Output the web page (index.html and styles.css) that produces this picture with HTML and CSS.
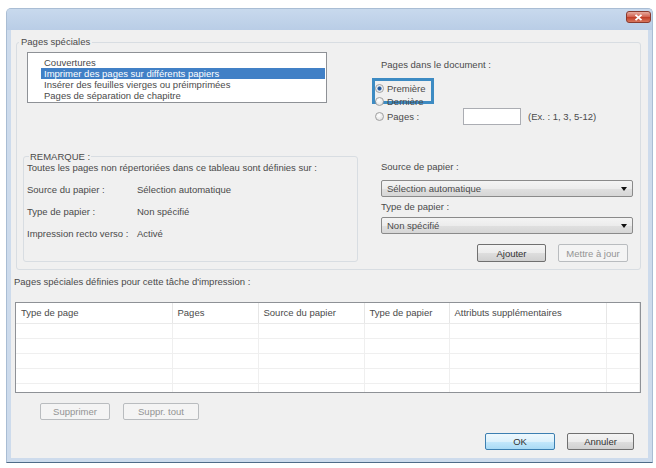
FILE: index.html
```html
<!DOCTYPE html>
<html lang="fr">
<head>
    <meta charset="UTF-8">
    <title>Pages spéciales</title>
    <link rel="stylesheet" href="styles.css">
</head>
<body>
    <div class="window">
        <div class="titlebar">
            <span class="close">
                <svg width="9" height="7" viewBox="0 0 9 7"><path d="M1.5 0.8 L7.5 6.2 M7.5 0.8 L1.5 6.2" stroke="#fff" stroke-width="1.8" fill="none"/></svg>
            </span>
        </div>
        <div class="client">
            <fieldset class="group">
                <legend>Pages spéciales</legend>
                <div class="group-body">
                    <ul class="listbox">
                        <li>Couvertures</li>
                        <li class="selected">Imprimer des pages sur différents papiers</li>
                        <li>Insérer des feuilles vierges ou préimprimées</li>
                        <li>Pages de séparation de chapitre</li>
                    </ul>
                    <div class="pages-in-doc">
                        <div class="caption first">Pages dans le document :</div>
                        <div class="radio focus"><span class="dot checked"></span>Première</div>
                        <div class="radio"><span class="dot"></span>Dernière</div>
                        <div class="radio pages-row">
                            <span class="pages-label"><span class="dot"></span>Pages :</span>
                            <span class="textbox"></span>
                            <span class="hint">(Ex. : 1, 3, 5-12)</span>
                        </div>
                    </div>
                    <fieldset class="note">
                        <legend>REMARQUE :</legend>
                        <p>Toutes les pages non répertoriées dans ce tableau sont définies sur :</p>
                        <div class="note-row"><span class="note-key">Source du papier :</span><span>Sélection automatique</span></div>
                        <div class="note-row"><span class="note-key">Type de papier :</span><span>Non spécifié</span></div>
                        <div class="note-row"><span class="note-key">Impression recto verso :</span><span>Activé</span></div>
                    </fieldset>
                    <div class="media">
                        <div class="caption">Source de papier :</div>
                        <div class="combo">Sélection automatique<span class="arrow"></span></div>
                        <div class="caption tight">Type de papier :</div>
                        <div class="combo">Non spécifié<span class="arrow"></span></div>
                        <div class="actions">
                            <button class="btn w69">Ajouter</button>
                            <button class="btn w70" disabled>Mettre à jour</button>
                        </div>
                    </div>
                </div>
            </fieldset>

            <div class="list-caption">Pages spéciales définies pour cette tâche d'impression :</div>
            <div class="listview">
                <table>
                    <colgroup>
                        <col style="width:156px"><col style="width:86px"><col style="width:106px">
                        <col style="width:85px"><col style="width:157px"><col>
                    </colgroup>
                    <thead>
                        <tr><th>Type de page</th><th>Pages</th><th>Source du papier</th><th>Type de papier</th><th>Attributs supplémentaires</th><th></th></tr>
                    </thead>
                    <tbody>
                        <tr><td></td><td></td><td></td><td></td><td></td><td></td></tr>
                        <tr><td></td><td></td><td></td><td></td><td></td><td></td></tr>
                        <tr><td></td><td></td><td></td><td></td><td></td><td></td></tr>
                        <tr><td></td><td></td><td></td><td></td><td></td><td></td></tr>
                        <tr><td></td><td></td><td></td><td></td><td></td><td></td></tr>
                    </tbody>
                </table>
            </div>

            <div class="row-buttons">
                <button class="btn w70" disabled>Supprimer</button>
                <button class="btn w76" disabled>Suppr. tout</button>
            </div>
            <div class="dialog-buttons">
                <button class="btn default w70">OK</button>
                <button class="btn w67">Annuler</button>
            </div>
        </div>
    </div>
</body>
</html>
```

FILE: styles.css
```css
* {
    box-sizing: border-box;
}
body {
    margin: 0;
    padding: 8px 0 0 6px;
    background: #fff;
    font-family: "Liberation Sans", Arial, sans-serif;
    font-size: 9.5px;
    color: #4a4a4a;
}
.window {
    width: 647px;
    height: 455px;
    display: flex;
    flex-direction: column;
    background: #cddbec;
    border: 1px solid #a9bdd4;
    border-bottom-color: #4f6b88;
    border-radius: 5px 5px 0 0;
}
.titlebar {
    height: 21px;
    display: flex;
    justify-content: flex-end;
    align-items: flex-start;
    padding: 2px 1px 0 0;
    background: linear-gradient(#c8d9ed, #b9cde6);
    border-radius: 4px 4px 0 0;
}
.close {
    width: 25px;
    height: 12px;
    display: flex;
    align-items: center;
    justify-content: center;
    border: 1px solid #8a3a2e;
    border-radius: 3px;
    background: linear-gradient(#e6ab9f, #d2604e 50%, #bf3b25 51%, #d8765d);
}
.client {
    flex: 1;
    margin: 0 4px 4px;
    background: #f0f0f0;
    display: flex;
    flex-direction: column;
}

/* group "Pages spéciales" */
.group {
    margin: 6px 7px 0 5px;
    padding: 4px 6px 7px 6px;
    border: 1px solid #d8dde2;
    border-radius: 3px;
    min-width: 0;
}
.group > legend {
    margin-left: -4px;
    padding: 0 2px;
    line-height: 12px;
}
.group-body {
    display: grid;
    grid-template-columns: 335px 259px;
    column-gap: 17px;
    row-gap: 26px;
}
.listbox {
    list-style: none;
    margin: 0 0 0 4px;
    padding: 4px 0 0;
    width: 300px;
    height: 51px;
    background: #fff;
    border: 1px solid #8e9196;
}
.listbox li {
    height: 11px;
    line-height: 11px;
    margin: 0 1px 0 13px;
    padding-left: 3px;
    white-space: nowrap;
}
.listbox li.selected {
    background: #4180c6;
    color: #fff;
}

.caption {
    padding-left: 6px;
    line-height: 12px;
}
.caption.first {
    margin-top: 7px;
}
.caption.tight {
    margin-top: 4px;
}
.radio {
    position: relative;
    display: flex;
    align-items: center;
    height: 13px;
    white-space: nowrap;
}
.pages-in-doc .focus {
    margin-top: 11px;
}
.focus::after {
    content: "";
    position: absolute;
    left: -3px;
    top: -4px;
    width: 56px;
    height: 20px;
    border: 3px solid #3d8bc3;
}
.dot {
    width: 9px;
    height: 9px;
    margin-right: 3px;
    border-radius: 50%;
    border: 1px solid #a0a0a0;
    background: radial-gradient(circle at 40% 35%, #fff, #d9d9d9);
    flex: none;
}
.dot.checked {
    background: radial-gradient(circle, #1f4f8a 0, #2b62a8 1.7px, #dfe6ee 2.4px, #fff 4px);
}
.pages-row {
    height: 17px;
}
.pages-label {
    width: 88px;
    display: flex;
    align-items: center;
}
.textbox {
    width: 58px;
    height: 17px;
    margin-right: 7px;
    background: #fff;
    border: 1px solid #abadb3;
}

/* REMARQUE */
.note {
    margin: 0;
    padding: 0 3px 13px;
    border: 1px solid #d8dde2;
    border-radius: 3px;
    min-width: 0;
}
.note > legend {
    margin-left: 2px;
    padding: 0 1px;
    line-height: 11px;
}
.note p {
    margin: 0 0 6px;
    line-height: 11px;
    white-space: nowrap;
}
.note-row {
    display: flex;
    height: 22px;
    line-height: 22px;
}
.note-key {
    width: 110px;
}

.media {
    padding-top: 10px;
}
.combo {
    position: relative;
    width: 252px;
    height: 17px;
    margin: 7px 0 0 6px;
    padding-left: 5px;
    line-height: 15px;
    border: 1px solid #8a8a8a;
    border-radius: 2px;
    background: linear-gradient(#f4f4f4, #ececec 50%, #e0e0e0 51%, #d6d6d6);
}
.caption.tight + .combo {
    margin-top: 4px;
}
.arrow {
    position: absolute;
    right: 5px;
    top: 6px;
    border-left: 3px solid transparent;
    border-right: 3px solid transparent;
    border-top: 4px solid #111;
}
.actions {
    display: flex;
    justify-content: flex-end;
    gap: 12px;
    margin: 10px 6px 0 0;
}

/* buttons */
.btn {
    height: 18px;
    padding: 0;
    font-family: inherit;
    font-size: 9.5px;
    color: #333;
    border: 1px solid #707070;
    border-radius: 2px;
    background: linear-gradient(#f4f4f4, #ececec 50%, #dedede 51%, #d0d0d0);
}
.btn:disabled {
    color: #939393;
    border-color: #b9bcbf;
    background: #f4f4f4;
}
.btn.default {
    border-color: #3c7fb1;
    background: linear-gradient(#eef8fd, #dcf1fc 50%, #c4e8fc 51%, #a9daf5);
}
.w67 { width: 67px; }
.w69 { width: 69px; }
.w70 { width: 70px; }
.w76 { width: 76px; }

/* table */
.list-caption {
    margin-top: 6px;
    padding-left: 3px;
    line-height: 12px;
}
.listview {
    margin: 14px 7px 0 4px;
    height: 91px;
    overflow: hidden;
    background: #fff;
    border: 1px solid #8e9196;
}
.listview table {
    width: 100%;
    table-layout: fixed;
    border-collapse: collapse;
}
.listview th {
    height: 20px;
    padding: 0 0 0 5px;
    text-align: left;
    font-weight: normal;
    white-space: nowrap;
    border-right: 1px solid #e6e6e6;
    border-bottom: 1px solid #eaeaea;
}
.listview td {
    height: 15px;
    padding: 0;
    border-right: 1px solid #efefef;
    border-bottom: 1px solid #efefef;
}
.row-buttons {
    display: flex;
    gap: 13px;
    margin-top: 10px;
    padding-left: 29px;
}
.row-buttons .btn,
.dialog-buttons .btn {
    height: 17px;
}
.dialog-buttons {
    display: flex;
    justify-content: flex-end;
    gap: 12px;
    margin-top: 13px;
    padding-right: 14px;
}
```
